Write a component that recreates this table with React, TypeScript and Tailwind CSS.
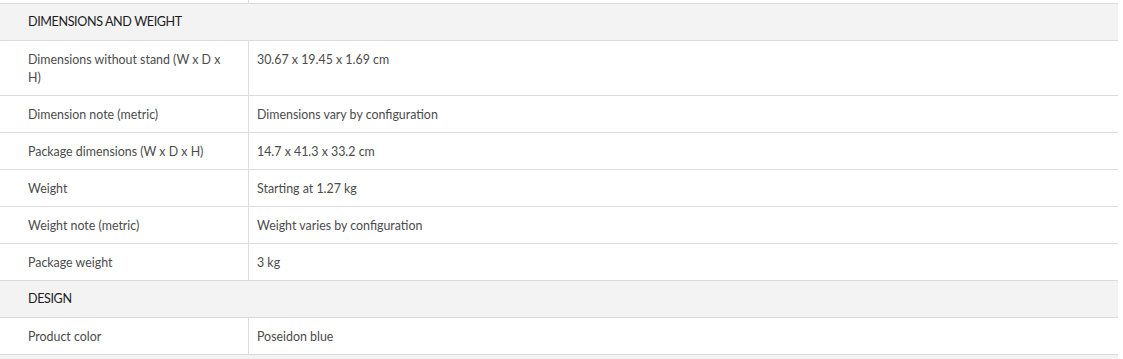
const sections = [
  {
    title: "DIMENSIONS AND WEIGHT",
    rows: [
      ["Dimensions without stand (W x D x H)", "30.67 x 19.45 x 1.69 cm"],
      ["Dimension note (metric)", "Dimensions vary by configuration"],
      ["Package dimensions (W x D x H)", "14.7 x 41.3 x 33.2 cm"],
      ["Weight", "Starting at 1.27 kg"],
      ["Weight note (metric)", "Weight varies by configuration"],
      ["Package weight", "3 kg"],
    ],
  },
  {
    title: "DESIGN",
    rows: [["Product color", "Poseidon blue"]],
  },
];

export default function App() {
  return (
    <div
      className="w-[1118px] bg-white text-[12.4px] leading-[18px] text-[#4b4b4b]"
      style={{ fontFamily: "Lato, 'Open Sans', sans-serif" }}
    >
      <div className="flex h-[4px] border-b border-[#dcdcdc]">
        <div className="w-[249px] border-r border-[#dcdcdc]" />
      </div>
      {sections.map((s) => (
        <div key={s.title}>
          <div className="border-b border-[#dcdcdc] bg-[#f3f3f3] pt-[9px] pb-[9px] pl-[28px] text-[12.6px] tracking-[-0.4px] text-[#1c1c24]">
            {s.title}
          </div>
          {s.rows.map(([k, v]) => (
            <div key={k} className="flex border-b border-[#dcdcdc]">
              <div className="w-[249px] shrink-0 border-r border-[#dcdcdc] pt-[10px] pb-[8px] pl-[28px] pr-[20px]">
                {k}
              </div>
              <div className="pt-[10px] pb-[8px] pl-[8px]">{v}</div>
            </div>
          ))}
        </div>
      ))}
      <div className="h-[36px] bg-[#f3f3f3]" />
    </div>
  );
}
